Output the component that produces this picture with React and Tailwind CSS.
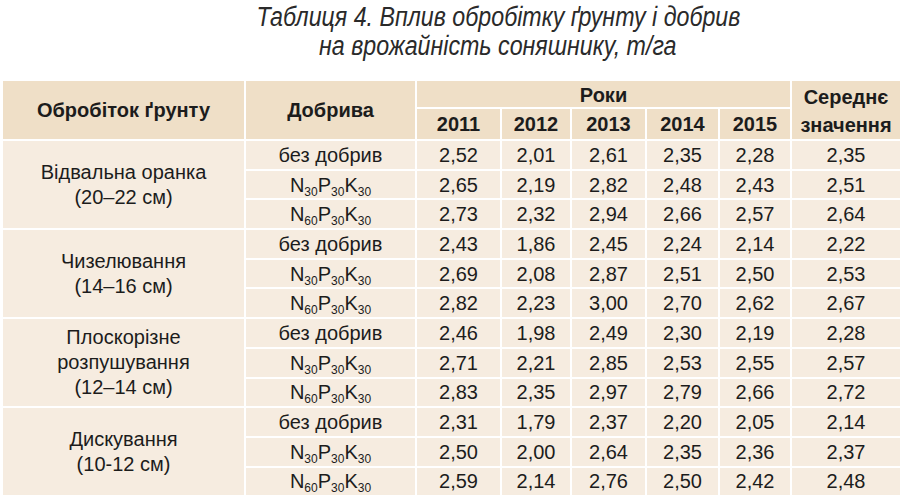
const groups = [
  {
    name: ["Відвальна оранка", "(20–22 см)"],
    rows: [
      ["2,52", "2,01", "2,61", "2,35", "2,28", "2,35"],
      ["2,65", "2,19", "2,82", "2,48", "2,43", "2,51"],
      ["2,73", "2,32", "2,94", "2,66", "2,57", "2,64"],
    ],
  },
  {
    name: ["Чизелювання", "(14–16 см)"],
    rows: [
      ["2,43", "1,86", "2,45", "2,24", "2,14", "2,22"],
      ["2,69", "2,08", "2,87", "2,51", "2,50", "2,53"],
      ["2,82", "2,23", "3,00", "2,70", "2,62", "2,67"],
    ],
  },
  {
    name: ["Плоскорізне", "розпушування", "(12–14 см)"],
    rows: [
      ["2,46", "1,98", "2,49", "2,30", "2,19", "2,28"],
      ["2,71", "2,21", "2,85", "2,53", "2,55", "2,57"],
      ["2,83", "2,35", "2,97", "2,79", "2,66", "2,72"],
    ],
  },
  {
    name: ["Дискування", "(10-12 см)"],
    rows: [
      ["2,31", "1,79", "2,37", "2,20", "2,05", "2,14"],
      ["2,50", "2,00", "2,64", "2,35", "2,36", "2,37"],
      ["2,59", "2,14", "2,76", "2,50", "2,42", "2,48"],
    ],
  },
];

const Npk = ({ n }) => (
  <span>
    N<sub className="text-[12px] align-[-1px]">{n}</sub>P
    <sub className="text-[12px] align-[-1px]">30</sub>K
    <sub className="text-[12px] align-[-1px]">30</sub>
  </span>
);

const fertilizers = [
  "без добрив",
  <Npk key="a" n="30" />,
  <Npk key="b" n="60" />,
];

const cell = "border-2 border-white text-center p-0";

export default function App() {
  return (
    <div
      className="w-[900px] h-[498px] overflow-hidden bg-white text-[#1c1c1c]"
      style={{ fontFamily: '"Liberation Sans", Arial, sans-serif' }}
    >
      <div className="h-[79px] pl-[96px] pt-[3px] flex flex-col items-center">
        <p className="italic text-[27px] leading-[29px] text-[#2a2a2a] scale-x-[0.86] whitespace-nowrap">
          Таблиця 4. Вплив обробітку ґрунту і добрив
        </p>
        <p className="italic text-[27px] leading-[29px] text-[#2a2a2a] scale-x-[0.86] whitespace-nowrap">
          на врожайність соняшнику, т/га
        </p>
      </div>
      <table className="ml-[1px] border-collapse table-fixed w-[901px] text-[20px] leading-[22px]">
        <colgroup>
          <col className="w-[243px]" />
          <col className="w-[171px]" />
          <col className="w-[85px]" />
          <col className="w-[70px]" />
          <col className="w-[75px]" />
          <col className="w-[73px]" />
          <col className="w-[72px]" />
          <col />
        </colgroup>
        <thead className="bg-[#efdfc7] font-bold">
          <tr className="h-[28px]">
            <th rowSpan={2} className={cell}>
              Обробіток ґрунту
            </th>
            <th rowSpan={2} className={cell}>
              Добрива
            </th>
            <th colSpan={5} className={`${cell} pt-[1px]`}>
              Роки
            </th>
            <th rowSpan={2} className={`${cell} leading-[28px] pt-[2px]`}>
              Середнє
              <br />
              значення
            </th>
          </tr>
          <tr className="h-[31px]">
            {["2011", "2012", "2013", "2014", "2015"].map((y) => (
              <th key={y} className={cell}>
                {y}
              </th>
            ))}
          </tr>
        </thead>
        <tbody className="bg-[#f6ece0]">
          {groups.map((g) =>
            g.rows.map((r, i) => (
              <tr key={g.name[0] + i} className="h-[29.7px]">
                {i === 0 && (
                  <td rowSpan={3} className={`${cell} leading-[25px]`}>
                    {g.name.map((l) => (
                      <div key={l}>{l}</div>
                    ))}
                  </td>
                )}
                <td className={cell}>{fertilizers[i]}</td>
                {r.map((v, j) => (
                  <td key={j} className={cell}>
                    {v}
                  </td>
                ))}
              </tr>
            ))
          )}
        </tbody>
      </table>
    </div>
  );
}
